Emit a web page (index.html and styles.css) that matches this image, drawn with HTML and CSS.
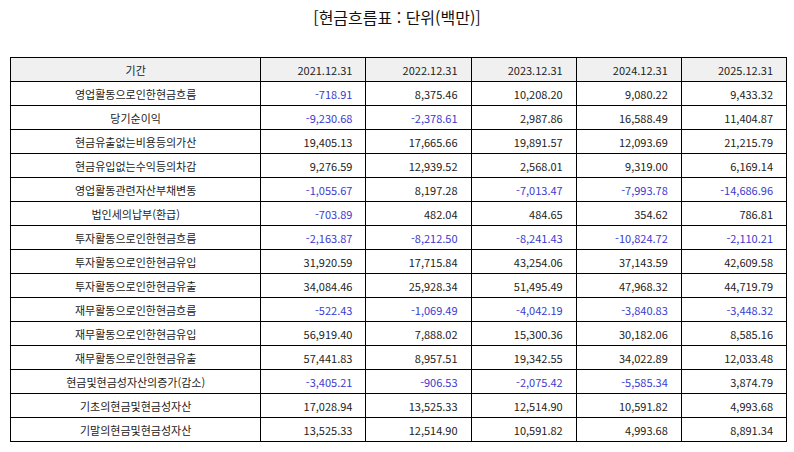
FILE: index.html
```html
<!DOCTYPE html>
<html lang="ko">
<head>
<meta charset="utf-8">
<title>현금흐름표</title>
<link rel="stylesheet" href="styles.css">
</head>
<body>
<div class="page">
  <h1 class="title">[현금흐름표 : 단위(백만)]</h1>
  <table class="cf">
    <colgroup>
      <col class="c-label"><col class="c-num"><col class="c-num"><col class="c-num"><col class="c-num"><col class="c-num">
    </colgroup>
    <thead>
      <tr><th class="lbl">기간</th><th>2021.12.31</th><th>2022.12.31</th><th>2023.12.31</th><th>2024.12.31</th><th>2025.12.31</th></tr>
    </thead>
    <tbody>
      <tr><td class="lbl">영업활동으로인한현금흐름</td><td class="neg">-718.91</td><td>8,375.46</td><td>10,208.20</td><td>9,080.22</td><td>9,433.32</td></tr>
      <tr><td class="lbl">당기순이익</td><td class="neg">-9,230.68</td><td class="neg">-2,378.61</td><td>2,987.86</td><td>16,588.49</td><td>11,404.87</td></tr>
      <tr><td class="lbl">현금유출없는비용등의가산</td><td>19,405.13</td><td>17,665.66</td><td>19,891.57</td><td>12,093.69</td><td>21,215.79</td></tr>
      <tr><td class="lbl">현금유입없는수익등의차감</td><td>9,276.59</td><td>12,939.52</td><td>2,568.01</td><td>9,319.00</td><td>6,169.14</td></tr>
      <tr><td class="lbl">영업활동관련자산부채변동</td><td class="neg">-1,055.67</td><td>8,197.28</td><td class="neg">-7,013.47</td><td class="neg">-7,993.78</td><td class="neg">-14,686.96</td></tr>
      <tr><td class="lbl">법인세의납부(환급)</td><td class="neg">-703.89</td><td>482.04</td><td>484.65</td><td>354.62</td><td>786.81</td></tr>
      <tr><td class="lbl">투자활동으로인한현금흐름</td><td class="neg">-2,163.87</td><td class="neg">-8,212.50</td><td class="neg">-8,241.43</td><td class="neg">-10,824.72</td><td class="neg">-2,110.21</td></tr>
      <tr><td class="lbl">투자활동으로인한현금유입</td><td>31,920.59</td><td>17,715.84</td><td>43,254.06</td><td>37,143.59</td><td>42,609.58</td></tr>
      <tr><td class="lbl">투자활동으로인한현금유출</td><td>34,084.46</td><td>25,928.34</td><td>51,495.49</td><td>47,968.32</td><td>44,719.79</td></tr>
      <tr><td class="lbl">재무활동으로인한현금흐름</td><td class="neg">-522.43</td><td class="neg">-1,069.49</td><td class="neg">-4,042.19</td><td class="neg">-3,840.83</td><td class="neg">-3,448.32</td></tr>
      <tr><td class="lbl">재무활동으로인한현금유입</td><td>56,919.40</td><td>7,888.02</td><td>15,300.36</td><td>30,182.06</td><td>8,585.16</td></tr>
      <tr><td class="lbl">재무활동으로인한현금유출</td><td>57,441.83</td><td>8,957.51</td><td>19,342.55</td><td>34,022.89</td><td>12,033.48</td></tr>
      <tr><td class="lbl">현금및현금성자산의증가(감소)</td><td class="neg">-3,405.21</td><td class="neg">-906.53</td><td class="neg">-2,075.42</td><td class="neg">-5,585.34</td><td>3,874.79</td></tr>
      <tr><td class="lbl">기초의현금및현금성자산</td><td>17,028.94</td><td>13,525.33</td><td>12,514.90</td><td>10,591.82</td><td>4,993.68</td></tr>
      <tr><td class="lbl">기말의현금및현금성자산</td><td>13,525.33</td><td>12,514.90</td><td>10,591.82</td><td>4,993.68</td><td>8,891.34</td></tr>
    </tbody>
  </table>
</div>
</body>
</html>
```

FILE: styles.css
```css
html, body {
  margin: 0;
  padding: 0;
  background: #ffffff;
}

.page {
  width: 794px;
  padding-top: 6px;
  font-family: "Noto Sans CJK KR", "Noto Sans", sans-serif;
  color: #222222;
}

.title {
  margin: 0 0 28px 0;
  height: 23px;
  line-height: 23px;
  font-size: 16px;
  font-weight: normal;
  text-align: center;
  color: #111111;
}

.cf {
  margin: 0 0 0 10px;
  width: 777px;
  border-collapse: collapse;
  table-layout: fixed;
  font-size: 11px;
}

.c-label { width: 250px; }
.c-num { width: 105px; }

.cf th,
.cf td {
  border: 1px solid #000000;
  height: 23px;
  padding: 0 13px 0 4px;
  text-align: right;
  font-weight: normal;
  white-space: nowrap;
  line-height: 14px;
}

.cf thead th {
  background: #f0f0f0;
}

.cf .lbl {
  text-align: center;
  padding: 0 4px;
}

.cf .neg {
  color: #3a3ad0;
}
```
